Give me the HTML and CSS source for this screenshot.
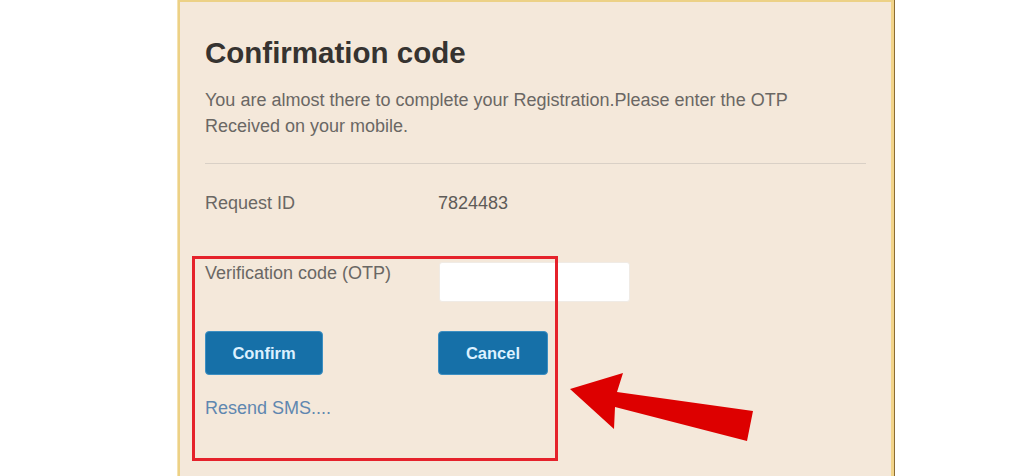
FILE: index.html
```html
<!DOCTYPE html>
<html lang="en">
<head>
    <meta charset="UTF-8">
    <title>Confirmation code</title>
    <link rel="stylesheet" href="styles.css">
</head>
<body>
    <div class="dialog">
        <h1 class="dialog-title">Confirmation code</h1>
        <p class="dialog-text">You are almost there to complete your Registration.Please enter the OTP Received on your mobile.</p>
        <hr class="divider">

        <div class="form-row row-request">
            <div class="form-label">Request ID</div>
            <div class="form-value">7824483</div>
        </div>

        <div class="form-row row-otp">
            <label class="form-label" for="otp">Verification code (OTP)</label>
            <input class="otp-input" id="otp" type="text">
        </div>

        <div class="form-row row-buttons">
            <div class="form-label"><button class="btn btn-confirm">Confirm</button></div>
            <button class="btn btn-cancel">Cancel</button>
        </div>

        <a class="resend-link" href="#">Resend SMS....</a>

        <!-- аннотация поверх скриншота -->
        <div class="highlight-box"></div>
    </div>

    <svg class="pointer-arrow" viewBox="565 368 195 78" width="195" height="78">
        <polygon fill="#dd0000" points="570,389 623,373 617,392 753,411 747,441 615,407 614,429"/>
    </svg>
</body>
</html>
```

FILE: styles.css
```css
body {
    margin: 0;
    background: #ffffff;
    font-family: 'Liberation Sans', Arial, sans-serif;
    overflow: hidden;
}
.dialog {
    position: relative;
    box-sizing: border-box;
    width: 716px;
    height: 490px;
    margin-left: 178px;
    padding: 34px 27px 0 25px;
    background: #f4e8da;
    border-top: 2px solid #ecd186;
    border-left: 2px solid #ecd186;
    border-right: 3px solid #f2d48a;
    box-shadow: 1px 0 0 #8c6c34, -1px 0 0 #f6e2b0;
}
.dialog-title {
    margin: 0;
    font-size: 29.5px;
    line-height: 34px;
    font-weight: 700;
    color: #363330;
}
.dialog-text {
    margin: 17px 0 0;
    font-size: 18px;
    line-height: 26px;
    color: #6a6764;
}
.divider {
    margin: 24px 0 0;
    border: none;
    border-top: 1px solid #d9d0c6;
    width: 661px;
}
.form-row {
    display: flex;
    align-items: flex-start;
}
.form-label {
    width: 233px;
    flex-shrink: 0;
    font-size: 18px;
    line-height: 22px;
    color: #6a6764;
}
.form-value {
    font-size: 18px;
    line-height: 22px;
    color: #5e5b58;
}
.row-request {
    margin-top: 28px;
}
.row-otp {
    margin-top: 48px;
}
.otp-input {
    box-sizing: border-box;
    width: 191px;
    height: 40px;
    margin: 0 0 0 1px;
    border: 1px solid #f0ebe5;
    border-radius: 3px;
    background: #ffffff;
    outline: none;
}
.row-buttons {
    margin-top: 29px;
}
.btn {
    box-sizing: border-box;
    height: 44px;
    border: 1px solid #3d8fc2;
    border-radius: 4px;
    background: #1670a8;
    color: #dcf1ff;
    font-family: 'Liberation Sans', Arial, sans-serif;
    font-size: 16.5px;
    font-weight: 700;
    cursor: pointer;
}
.btn-confirm {
    width: 118px;
}
.btn-cancel {
    width: 110px;
}
.resend-link {
    display: block;
    margin-top: 22px;
    font-size: 18px;
    line-height: 22px;
    color: #5f87b0;
    text-decoration: none;
}
.highlight-box {
    position: absolute;
    left: 12px;
    top: 254px;
    width: 360px;
    height: 199px;
    border: 3px solid #e5222b;
}
.pointer-arrow {
    position: absolute;
    left: 565px;
    top: 368px;
}
```
